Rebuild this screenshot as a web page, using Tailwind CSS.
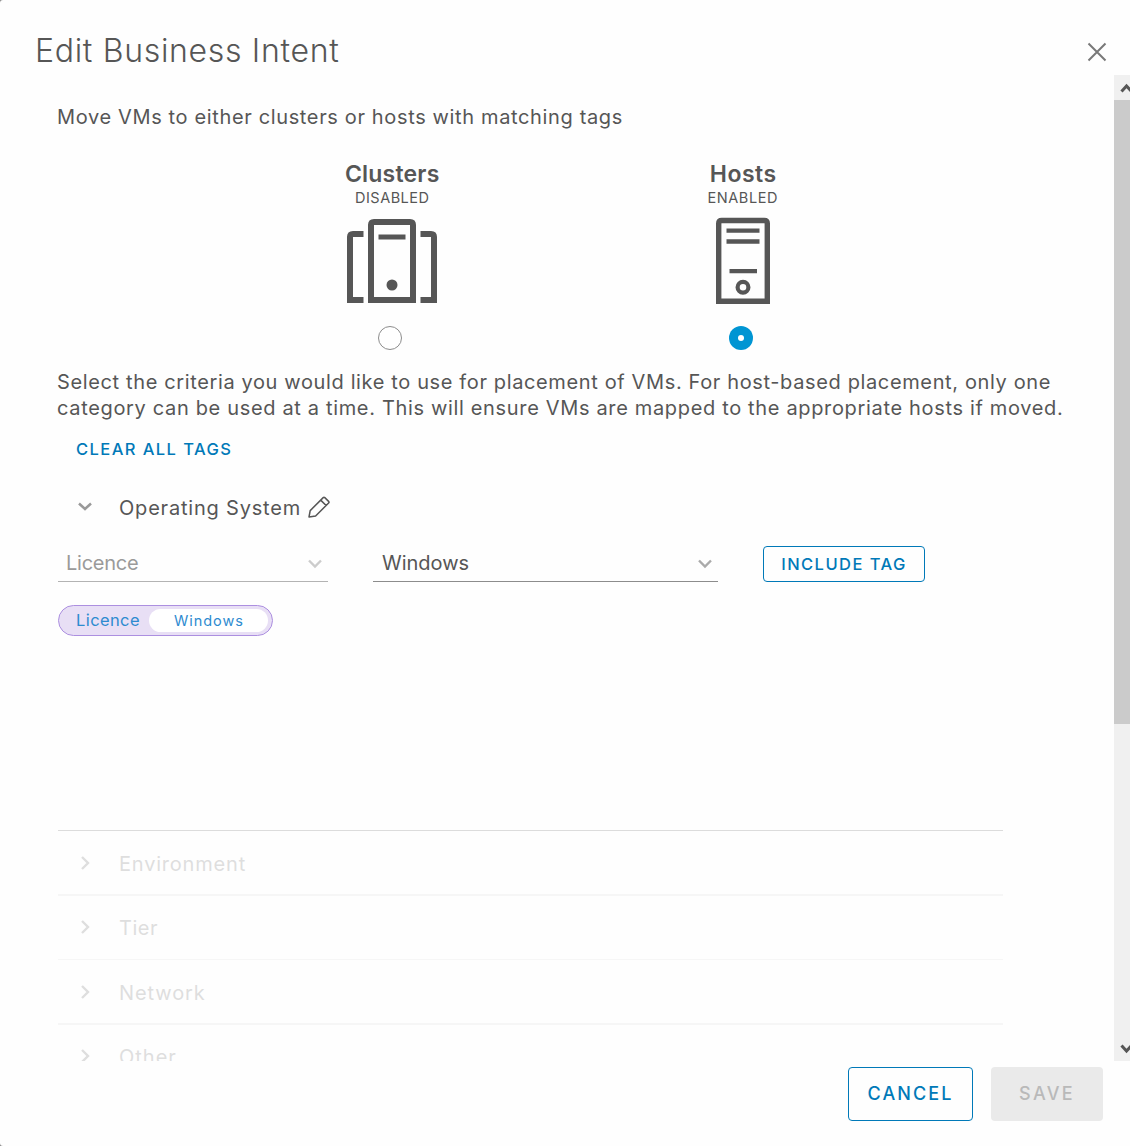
<!DOCTYPE html>
<html lang="en">
<head>
<meta charset="utf-8">
<title>Edit Business Intent</title>
<script src="https://cdn.jsdelivr.net/npm/@tailwindcss/browser@4"></script>
</head>
<body class="bg-[#8a8a8a] font-['Inter',sans-serif] text-[#565656]">
<div class="flex h-[1146px] w-[1130px] flex-col overflow-hidden rounded-l-[3px] bg-[#fefefe] whitespace-nowrap">

  <header class="flex h-[75px] shrink-0 items-start justify-between pt-[26px] pr-[22px] pl-[35px]">
    <h1 class="text-[32px] leading-[49px] font-light tracking-[0.68px]">Edit Business Intent</h1>
    <svg class="mt-[15px] h-[22px] w-[22px]" viewBox="0 0 22 22" fill="none" stroke="#787878" stroke-width="2"><path d="M2.500 2.500l17 17M19.500 2.500l-17 17"/></svg>
  </header>

  <div class="flex h-[986px] shrink-0 overflow-hidden">
    <main class="h-[986px] w-[1114px] overflow-hidden pl-[58px]">
      <p class="-ml-px flex h-[84px] items-center text-xl tracking-[0.64px]">Move VMs to either clusters or hosts with matching tags</p>

      <div class="ml-[159px] grid w-[701px] grid-cols-2">
        <label class="flex flex-col items-center">
          <span class="h-[30px] text-[23px] leading-[30px] font-semibold tracking-[0.2px]">Clusters</span>
          <span class="h-5 text-[14.5px] leading-[18px] tracking-[0.5px]">DISABLED</span>
          <svg class="mt-2 h-[88px] w-[92px]" viewBox="346 217 92 88" fill="none" stroke="#565656" stroke-width="6">
            <path d="M371 300V225Q371 222 374 222H410Q413 222 413 225V300Z"/>
            <path d="M363.500 234H353Q350 234 350 237V300H363.500M420.500 234H431Q434 234 434 237V300H420.500"/>
            <path d="M378.500 237H405.500" stroke-width="5"/>
            <circle cx="392" cy="285" r="5.500" fill="#565656" stroke="none"/>
          </svg>
          <span class="mt-[21px] mr-1 h-6 w-6 rounded-full border border-[#8c8c8c] bg-white"></span>
        </label>
        <label class="flex flex-col items-center">
          <span class="h-[30px] pl-px text-[23px] leading-[30px] font-semibold tracking-[0.5px]">Hosts</span>
          <span class="h-5 text-[14.5px] leading-[18px] tracking-[0.6px]">ENABLED</span>
          <svg class="mt-2 h-[88px] w-[56px]" viewBox="715 217 56 88" fill="none" stroke="#565656" stroke-width="5.400">
            <path d="M718.700 301.300V223.500Q718.700 220.500 721.700 220.500H764.300Q767.300 220.500 767.300 223.500V301.300Z"/>
            <path d="M726.500 230.700H759.500M726.500 241.500H759.500M729.500 271.200H757" stroke-width="4.300"/>
            <circle cx="743" cy="287.300" r="5.400" stroke-width="4.200"/>
          </svg>
          <span class="mt-[21px] mr-1 flex h-6 w-6 items-center justify-center rounded-full bg-[#0095d3]"><span class="h-1.5 w-1.5 rounded-full bg-white"></span></span>
        </label>
      </div>

      <p class="-ml-px mt-[19px] text-xl leading-[26px] tracking-[0.63px]">Select the criteria you would like to use for placement of VMs. For host-based placement, only one<br><span class="tracking-[0.66px]">category can be used at a time. This will ensure VMs are mapped to the appropriate hosts if moved.</span></p>

      <div class="flex h-14 items-center pl-[18px]"><button class="text-[16.5px] font-medium tracking-[1.42px] text-[#0079b8]">CLEAR ALL TAGS</button></div>

      <div class="flex h-[62px] items-center">
        <svg class="-mt-0.5 ml-5 h-3.5 w-3.5" viewBox="0 0 14 14" fill="none" stroke="#999" stroke-width="2.500"><path d="M1 3.500l6 5.500 6-5.500"/></svg>
        <span class="ml-[27px] w-[189px] text-xl tracking-[0.8px]">Operating System</span>
        <svg class="-mt-0.5 h-[22px] w-[22px]" viewBox="0 0 22 22" fill="none" stroke="#565656" stroke-width="1.500" stroke-linejoin="round"><path d="M1 21L2.200 14.600 15.200 1.600Q16 .8 16.800 1.600L20.600 5.400Q21.400 6.200 20.600 7L7.600 20Z M12.700 4.100L18.100 9.500"/></svg>
      </div>

      <div class="mt-[7px] flex h-9 gap-[45px]">
        <div class="flex w-[270px] items-center justify-between border-b border-[#b3b3b3] pr-1.5 pb-0.5 pl-2 text-[#9a9a9a]">
          <span class="text-xl tracking-[-0.25px]">Licence</span>
          <svg class="mt-0.5 h-3.5 w-3.5" viewBox="0 0 14 14" fill="none" stroke="#ccc" stroke-width="2.400"><path d="M1 3.500l6 6 6-6"/></svg>
        </div>
        <div class="flex w-[345px] items-center justify-between border-b border-[#8c8c8c] pr-1.5 pb-0.5 pl-[9px]">
          <span class="text-xl">Windows</span>
          <svg class="mt-0.5 h-3.5 w-3.5" viewBox="0 0 14 14" fill="none" stroke="#aaa" stroke-width="2.400"><path d="M1 3.500l6 6 6-6"/></svg>
        </div>
        <button class="w-[162px] rounded border border-[#0079b8] text-[16.5px] font-medium tracking-[1.45px] text-[#0079b8]">INCLUDE TAG</button>
      </div>

      <div class="mt-[23px] flex h-[31px] w-[215px] items-center rounded-full border border-[#ac8fe0] bg-[#e8dff5] pr-1 pl-[17px] text-[#2e8bd0]">
        <span class="w-[73px] text-[16.5px] tracking-[0.4px]">Licence</span>
        <span class="h-[23px] w-[119px] rounded-full bg-white pl-px text-center text-[14.5px] leading-[23px] tracking-[0.95px]">Windows</span>
      </div>

      <div class="mt-[194px] w-[945px] border-t border-[#dcdcdc] text-xl text-[#dedede]">
        <div class="flex h-[65px] items-center border-b-2 border-[#f6f6f6]">
          <svg class="ml-5 h-3.5 w-3.5" viewBox="0 0 14 14" fill="none" stroke="#dedede" stroke-width="2.400"><path d="M4 1l6 6-6 6"/></svg>
          <span class="ml-[27px] pt-0.5 tracking-[0.8px]">Environment</span>
        </div>
        <div class="flex h-16 items-center border-b border-[#f6f6f6]">
          <svg class="-mt-0.5 ml-5 h-3.5 w-3.5" viewBox="0 0 14 14" fill="none" stroke="#dedede" stroke-width="2.400"><path d="M4 1l6 6-6 6"/></svg>
          <span class="ml-[27px] tracking-[0.5px]">Tier</span>
        </div>
        <div class="flex h-[65px] items-center border-b-2 border-[#f6f6f6]">
          <svg class="ml-5 h-3.5 w-3.5" viewBox="0 0 14 14" fill="none" stroke="#dedede" stroke-width="2.400"><path d="M4 1l6 6-6 6"/></svg>
          <span class="ml-[27px] pt-0.5 tracking-[0.9px]">Network</span>
        </div>
        <div class="flex h-16 items-center">
          <svg class="-mt-0.5 ml-5 h-3.5 w-3.5" viewBox="0 0 14 14" fill="none" stroke="#dedede" stroke-width="2.400"><path d="M4 1l6 6-6 6"/></svg>
          <span class="ml-[27px] tracking-[1px]">Other</span>
        </div>
      </div>
    </main>

    <div class="flex w-4 flex-col overflow-hidden bg-[#f0f0f0]">
      <svg class="h-[25px] w-4" viewBox="0 0 16 25" fill="none" stroke="#565656" stroke-width="3"><path d="M7.500 16.500l5-5.500 5 5.500"/></svg>
      <div class="h-[624px] bg-[#cbcbcb]"></div>
      <svg class="mt-auto h-[25px] w-4" viewBox="0 0 16 25" fill="none" stroke="#565656" stroke-width="3"><path d="M7.500 9.500l5 5.500 5-5.500"/></svg>
    </div>
  </div>

  <footer class="flex h-[85px] shrink-0 justify-end gap-[18px] pt-1.5 pr-[27px]">
    <button class="h-[54px] w-[125px] rounded border border-[#0079b8] pb-0.5 text-[18px] font-medium tracking-[2.1px] text-[#0079b8]">CANCEL</button>
    <button class="h-[54px] w-28 rounded bg-[#eaeaea] pb-0.5 text-[18px] font-medium tracking-[2.3px] text-[#b9b9b9]">SAVE</button>
  </footer>
</div>
</body>
</html>
